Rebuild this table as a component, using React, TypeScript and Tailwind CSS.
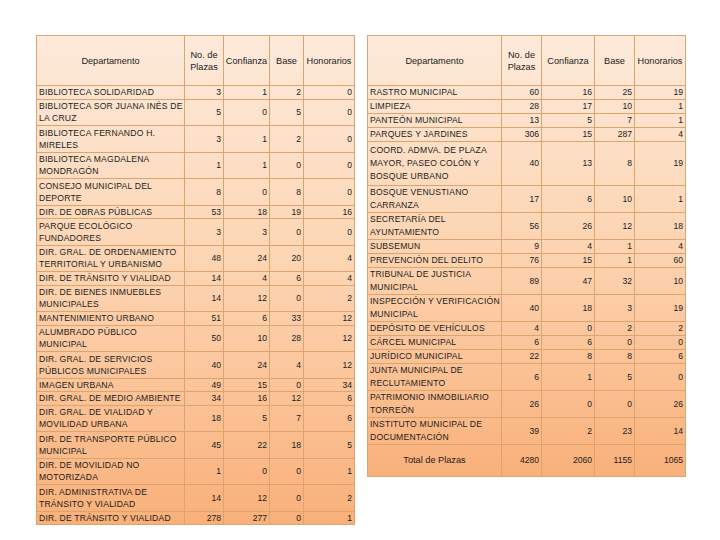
import React from "react";

type Row = { name: string[]; plazas: string; confianza: string; base: string; honorarios: string };

const r = (name: string[], plazas: string, confianza: string, base: string, honorarios: string): Row => ({
  name,
  plazas,
  confianza,
  base,
  honorarios,
});

const leftRows: Row[] = [
  r(["BIBLIOTECA SOLIDARIDAD"], "3", "1", "2", "0"),
  r(["BIBLIOTECA SOR JUANA INÉS DE", "LA CRUZ"], "5", "0", "5", "0"),
  r(["BIBLIOTECA FERNANDO H.", "MIRELES"], "3", "1", "2", "0"),
  r(["BIBLIOTECA MAGDALENA", "MONDRAGÓN"], "1", "1", "0", "0"),
  r(["CONSEJO MUNICIPAL DEL", "DEPORTE"], "8", "0", "8", "0"),
  r(["DIR. DE OBRAS PÚBLICAS"], "53", "18", "19", "16"),
  r(["PARQUE ECOLÓGICO", "FUNDADORES"], "3", "3", "0", "0"),
  r(["DIR. GRAL. DE ORDENAMIENTO", "TERRITORIAL Y URBANISMO"], "48", "24", "20", "4"),
  r(["DIR. DE TRÁNSITO Y VIALIDAD"], "14", "4", "6", "4"),
  r(["DIR. DE BIENES INMUEBLES", "MUNICIPALES"], "14", "12", "0", "2"),
  r(["MANTENIMIENTO URBANO"], "51", "6", "33", "12"),
  r(["ALUMBRADO PÚBLICO", "MUNICIPAL"], "50", "10", "28", "12"),
  r(["DIR. GRAL. DE SERVICIOS", "PÚBLICOS MUNICIPALES"], "40", "24", "4", "12"),
  r(["IMAGEN URBANA"], "49", "15", "0", "34"),
  r(["DIR. GRAL. DE MEDIO AMBIENTE"], "34", "16", "12", "6"),
  r(["DIR. GRAL. DE VIALIDAD Y", "MOVILIDAD URBANA"], "18", "5", "7", "6"),
  r(["DIR. DE TRANSPORTE PÚBLICO", "MUNICIPAL"], "45", "22", "18", "5"),
  r(["DIR. DE MOVILIDAD NO", "MOTORIZADA"], "1", "0", "0", "1"),
  r(["DIR. ADMINISTRATIVA DE", "TRÁNSITO Y VIALIDAD"], "14", "12", "0", "2"),
  r(["DIR. DE TRÁNSITO Y VIALIDAD"], "278", "277", "0", "1"),
];

const rightRows: Row[] = [
  r(["RASTRO MUNICIPAL"], "60", "16", "25", "19"),
  r(["LIMPIEZA"], "28", "17", "10", "1"),
  r(["PANTEÓN MUNICIPAL"], "13", "5", "7", "1"),
  r(["PARQUES Y JARDINES"], "306", "15", "287", "4"),
  r(["COORD. ADMVA. DE PLAZA", "MAYOR, PASEO COLÓN Y", "BOSQUE URBANO"], "40", "13", "8", "19"),
  r(["BOSQUE VENUSTIANO", "CARRANZA"], "17", "6", "10", "1"),
  r(["SECRETARÍA DEL", "AYUNTAMIENTO"], "56", "26", "12", "18"),
  r(["SUBSEMUN"], "9", "4", "1", "4"),
  r(["PREVENCIÓN DEL DELITO"], "76", "15", "1", "60"),
  r(["TRIBUNAL DE JUSTICIA", "MUNICIPAL"], "89", "47", "32", "10"),
  r(["INSPECCIÓN Y VERIFICACIÓN", "MUNICIPAL"], "40", "18", "3", "19"),
  r(["DEPÓSITO DE VEHÍCULOS"], "4", "0", "2", "2"),
  r(["CÁRCEL MUNICIPAL"], "6", "6", "0", "0"),
  r(["JURÍDICO MUNICIPAL"], "22", "8", "8", "6"),
  r(["JUNTA MUNICIPAL DE", "RECLUTAMIENTO"], "6", "1", "5", "0"),
  r(["PATRIMONIO INMOBILIARIO", "TORREÓN"], "26", "0", "0", "26"),
  r(["INSTITUTO MUNICIPAL DE", "DOCUMENTACIÓN"], "39", "2", "23", "14"),
];

const cell = "border border-[#dea46e] p-0";
const num = `${cell} text-right pr-[2px] align-middle`;

const Header: React.FC = () => (
  <thead>
    <tr className="h-[50px] text-[9.2px] leading-[12px]">
      <th className={`${cell} font-normal text-center`}>Departamento</th>
      <th className={`${cell} font-normal text-center`}>
        No. de
        <br />
        Plazas
      </th>
      <th className={`${cell} font-normal text-center`}>Confianza</th>
      <th className={`${cell} font-normal text-center`}>Base</th>
      <th className={`${cell} font-normal text-center`}>Honorarios</th>
    </tr>
  </thead>
);

const Table: React.FC<{
  rows: Row[];
  widths: string[];
  heights: string[];
  leading: string;
  total?: boolean;
}> = ({ rows, widths, heights, leading, total }) => (
  <table className="w-[318px] shrink-0 table-fixed border-collapse bg-linear-to-b from-[#fdeadb] via-[#fcd3b0] to-[#f9b07a] text-[#1c1c1c]">
    <colgroup>
      {widths.map((w, i) => (
        <col key={i} className={w} />
      ))}
    </colgroup>
    <Header />
    <tbody className={`text-[8.6px] ${leading}`}>
      {rows.map((row, i) => (
        <tr key={i} className={heights[row.name.length - 1]}>
          <td className={`${cell} pl-[2px] align-middle whitespace-nowrap tracking-[0.2px]`}>
            {row.name.map((line, j) => (
              <div key={j}>{line}</div>
            ))}
          </td>
          <td className={num}>{row.plazas}</td>
          <td className={num}>{row.confianza}</td>
          <td className={num}>{row.base}</td>
          <td className={num}>{row.honorarios}</td>
        </tr>
      ))}
      {total && (
        <tr className="h-[32px]">
          <td className={`${cell} text-center text-[9.2px]`}>Total de Plazas</td>
          <td className={num}>4280</td>
          <td className={num}>2060</td>
          <td className={num}>1155</td>
          <td className={num}>1065</td>
        </tr>
      )}
    </tbody>
  </table>
);

export default function App() {
  return (
    <div className="w-[720px] h-[540px] bg-white pt-[35px] pl-[36px] flex items-start gap-[12px] font-['Liberation_Sans',Arial,sans-serif]">
      <Table
        rows={leftRows}
        widths={["w-[148px]", "w-[39px]", "w-[46px]", "w-[34px]", "w-[51px]"]}
        heights={["h-[13.5px]", "h-[26.5px]", "h-[39px]"]}
        leading="leading-[12.2px]"
      />
      <Table
        rows={rightRows}
        widths={["w-[134px]", "w-[40px]", "w-[53px]", "w-[40px]", "w-[51px]"]}
        heights={["h-[14px]", "h-[27px]", "h-[44px]"]}
        leading="leading-[13px]"
        total
      />
    </div>
  );
}
